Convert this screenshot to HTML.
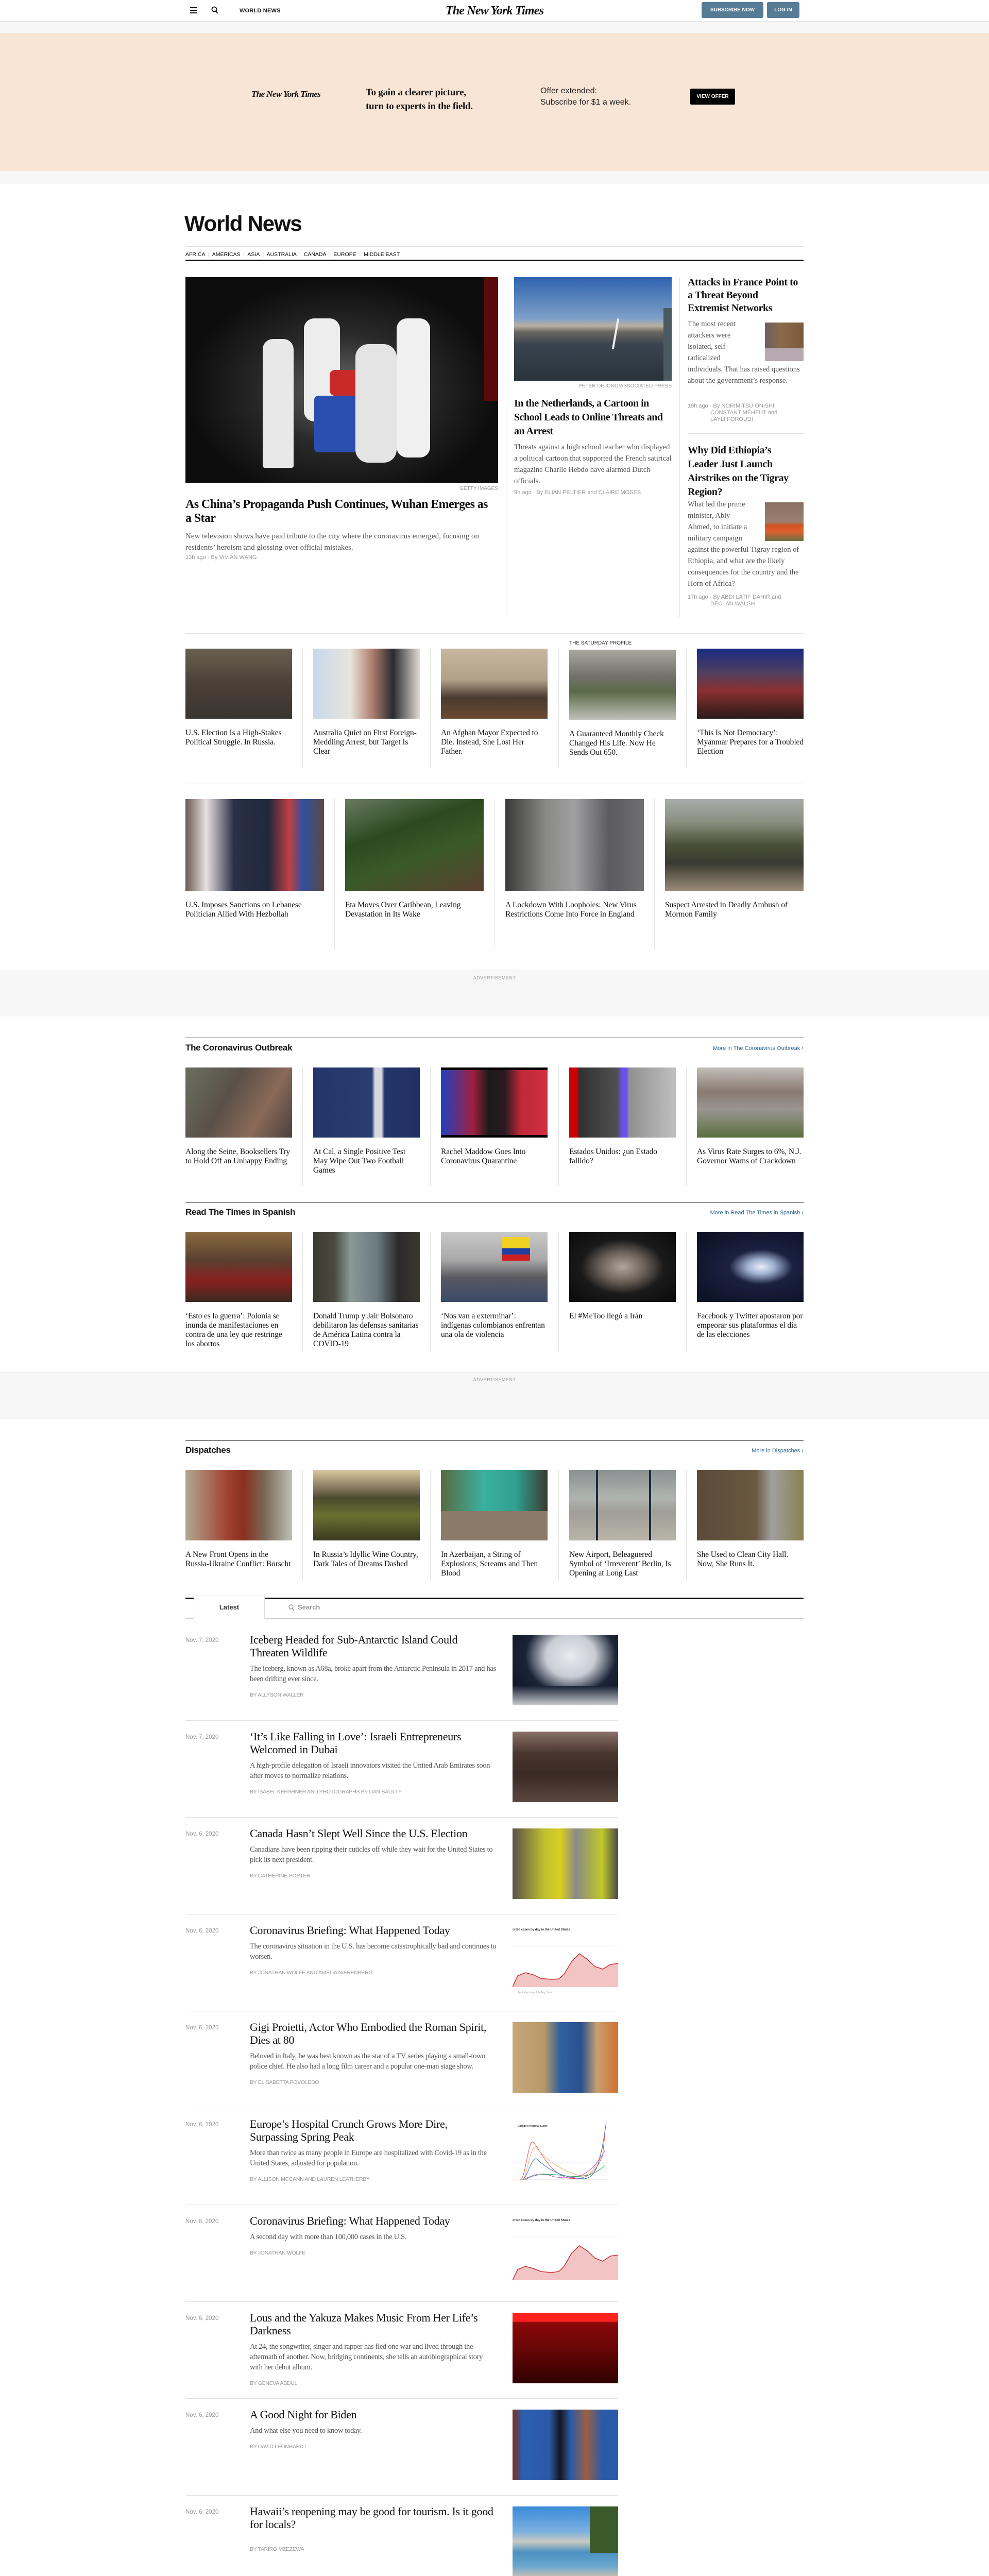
<!DOCTYPE html>
<html style="overflow:hidden;height:5248px"><head><meta charset="utf-8"><style>
*{box-sizing:border-box;margin:0;padding:0}
body{width:1920px;height:5248px;position:relative;background:#fff;font-family:"Liberation Serif",serif;color:#121212;overflow:hidden}
#wrap{position:absolute;left:0;top:0;width:1920px;height:5248px;overflow:hidden}
.abs{position:absolute}
.sans{font-family:"Liberation Sans",sans-serif}
.img{position:absolute;overflow:hidden}
.hl{font-family:"Liberation Serif",serif}
.cap{font-family:"Liberation Sans",sans-serif;font-size:10px;color:#999;text-transform:uppercase}
.by{font-family:"Liberation Sans",sans-serif;font-size:11px;color:#999}
.by b{font-weight:normal;text-transform:uppercase}
.card{position:absolute;width:207px}
.card .pic{width:207px;height:136px}
.card h3{font-weight:normal;font-size:15.5px;line-height:18px;margin-top:19px;letter-spacing:-0.1px}
.vd{position:absolute;width:1px;background:#e2e2e2}
.hr{position:absolute;left:360px;width:1200px;height:1px;background:#e2e2e2}
.sec{position:absolute;left:360px;width:1200px;border-top:1px solid #121212}
.sec h2{font-family:"Liberation Sans",sans-serif;font-weight:bold;font-size:17px;margin-top:9px;letter-spacing:-0.3px}
.sec a{position:absolute;right:0;top:14px;font-family:"Liberation Sans",sans-serif;font-size:11px;color:#326891;text-decoration:none}
.item{position:absolute;left:360px;width:840px;height:188px;border-bottom:1px solid #e2e2e2}
.item .d{position:absolute;left:0;top:26px;font-family:"Liberation Sans",sans-serif;font-size:11.5px;color:#999}
.item h3{position:absolute;left:125px;top:18px;width:480px;font-weight:normal;font-size:22px;line-height:25px;letter-spacing:-0.3px}
.item p{font-size:14.5px;line-height:20px;color:#555;margin-top:9px}
.item .b{font-family:"Liberation Sans",sans-serif;font-size:10.5px;color:#999;margin-top:9px;text-transform:uppercase}
.item .pic{position:absolute;left:635px;top:21px;width:205px;height:137px;overflow:hidden}
.fc{position:absolute;top:5116px;font-family:"Liberation Sans",sans-serif;font-size:12px;line-height:24px;color:#121212}
.fc .h{font-weight:bold;font-size:11px;color:#333}
</style></head><body><div id="wrap">

<!-- header -->
<div class="abs" style="left:0;top:0;width:1920px;height:42px;border-bottom:1px solid #e2e2e2;background:#fff"></div>
<svg class="abs" style="left:369px;top:14px" width="14" height="12"><rect y="0" width="14" height="2" fill="#111"/><rect y="5" width="14" height="2" fill="#111"/><rect y="10" width="14" height="2" fill="#111"/></svg>
<svg class="abs" style="left:410px;top:12px" width="14" height="16"><circle cx="6" cy="6" r="4.5" fill="none" stroke="#111" stroke-width="1.8"/><line x1="9" y1="9.5" x2="12.5" y2="14" stroke="#111" stroke-width="2"/></svg>
<div class="abs sans" style="left:465px;top:15px;font-size:11px;font-weight:bold;letter-spacing:0.2px">WORLD NEWS</div>
<div class="abs" style="left:860px;top:8px;width:200px;text-align:center;font-size:24px;font-weight:bold;letter-spacing:-0.8px;font-style:italic">The New York Times</div>
<div class="abs sans" style="left:1362px;top:4px;width:120px;height:31px;background:#567b95;border-radius:3px;color:#fff;font-size:10px;font-weight:bold;text-align:center;line-height:31px">SUBSCRIBE NOW</div>
<div class="abs sans" style="left:1489px;top:4px;width:63px;height:31px;background:#567b95;border-radius:3px;color:#fff;font-size:10px;font-weight:bold;text-align:center;line-height:31px">LOG IN</div>

<!-- ad band -->
<div class="abs" style="left:0;top:43px;width:1920px;height:314px;background:#f7f7f7"></div>
<div class="abs" style="left:0;top:64px;width:1920px;height:268px;background:#f8e5d5"></div>
<div class="abs" style="left:488px;top:173px;font-size:17px;font-weight:bold;font-style:italic;letter-spacing:-0.6px">The New York Times</div>
<div class="abs" style="left:710px;top:166px;font-size:19px;font-weight:bold;line-height:27px;letter-spacing:-0.3px">To gain a clearer picture,<br>turn to experts in the field.</div>
<div class="abs sans" style="left:1049px;top:166px;font-size:16px;line-height:22px;color:#222">Offer extended:<br>Subscribe for $1 a week.</div>
<div class="abs sans" style="left:1340px;top:172px;width:87px;height:31px;background:#000;color:#fff;font-size:10px;font-weight:bold;text-align:center;line-height:31px;border-radius:2px">VIEW OFFER</div>

<!-- title -->
<div class="abs sans" style="left:358px;top:410px;font-size:42px;font-weight:bold;letter-spacing:-1.2px">World News</div>
<div class="hr" style="top:477px;height:2px"></div>
<div class="abs sans" style="left:360px;top:488px;font-size:10.5px;color:#121212">AFRICA <span style="color:#ccc">&nbsp;|&nbsp;</span> AMERICAS <span style="color:#ccc">&nbsp;|&nbsp;</span> ASIA <span style="color:#ccc">&nbsp;|&nbsp;</span> AUSTRALIA <span style="color:#ccc">&nbsp;|&nbsp;</span> CANADA <span style="color:#ccc">&nbsp;|&nbsp;</span> EUROPE <span style="color:#ccc">&nbsp;|&nbsp;</span> MIDDLE EAST</div>
<div class="abs" style="left:360px;top:504px;width:1200px;height:3px;background:#121212"></div>

<!-- lead -->
<div class="img" style="left:360px;top:538px;width:607px;height:399px;background:radial-gradient(ellipse at 50% 55%,#6a6a6a 0,#2a2a2a 35%,#0d0d0d 70%)">
 <div class="abs" style="left:150px;top:120px;width:60px;height:250px;background:#e8e8e8;border-radius:20px 20px 4px 4px"></div>
 <div class="abs" style="left:230px;top:80px;width:70px;height:200px;background:#ededed;border-radius:20px"></div>
 <div class="abs" style="left:250px;top:230px;width:90px;height:110px;background:#2b4fb0;border-radius:8px"></div>
 <div class="abs" style="left:280px;top:180px;width:70px;height:50px;background:#c82a2a;border-radius:10px"></div>
 <div class="abs" style="left:330px;top:130px;width:80px;height:230px;background:#e4e4e4;border-radius:25px"></div>
 <div class="abs" style="left:410px;top:80px;width:65px;height:270px;background:#f0f0f0;border-radius:20px"></div>
 <div class="abs" style="left:580px;top:0;width:27px;height:240px;background:#5a0a0a"></div>
</div>
<div class="abs cap" style="left:867px;top:943px;width:100px;text-align:right">Getty Images</div>
<div class="abs hl" style="left:360px;top:966px;width:600px;font-size:24px;line-height:27px;font-weight:bold;letter-spacing:-0.6px">As China’s Propaganda Push Continues, Wuhan Emerges as a Star</div>
<div class="abs" style="left:360px;top:1030px;width:600px;font-size:15px;line-height:22px;color:#555">New television shows have paid tribute to the city where the coronavirus emerged, focusing on residents’ heroism and glossing over official mistakes.</div>
<div class="abs by" style="left:360px;top:1076px">13h ago · By <b>Vivian Wang</b></div>

<div class="vd" style="left:982px;top:538px;height:660px"></div>
<div class="vd" style="left:1319px;top:538px;height:660px"></div>

<div class="img" style="left:998px;top:538px;width:306px;height:201px;background:linear-gradient(180deg,#2f63b0 0,#7fa0c8 40%,#b8b0a0 47%,#6a6660 53%,#3a4450 65%,#2a333c 100%)">
 <div class="abs" style="left:195px;top:80px;width:4px;height:60px;background:#eee;transform:rotate(10deg)"></div>
 <div class="abs" style="left:290px;top:60px;width:16px;height:141px;background:#4a5a60"></div>
</div>
<div class="abs cap" style="left:1104px;top:744px;width:200px;text-align:right">Peter Dejong/Associated Press</div>
<div class="abs hl" style="left:998px;top:770px;width:306px;font-size:20px;line-height:27px;font-weight:bold;letter-spacing:-0.5px">In the Netherlands, a Cartoon in School Leads to Online Threats and an Arrest</div>
<div class="abs" style="left:998px;top:857px;width:310px;font-size:14.5px;line-height:22px;color:#555">Threats against a high school teacher who displayed a political cartoon that supported the French satirical magazine Charlie Hebdo have alarmed Dutch officials.</div>
<div class="abs by" style="left:998px;top:950px">9h ago · By <b>Elian Peltier</b> and <b>Claire Moses</b></div>

<div class="abs hl" style="left:1335px;top:536px;width:215px;font-size:20px;line-height:25px;font-weight:bold;letter-spacing:-0.4px">Attacks in France Point to a Threat Beyond Extremist Networks</div>
<div class="img" style="left:1485px;top:626px;width:75px;height:75px;background:linear-gradient(90deg,#6a6060 0,#8a6a48 40%,#7a5a3a 100%)"><div class="abs" style="left:0;top:50px;width:75px;height:25px;background:#b8a8b0"></div></div>
<div class="abs" style="left:1335px;top:618px;width:225px;font-size:14.5px;line-height:22px;color:#555">The most recent<br>attackers were<br>isolated, self-<br>radicalized<br>individuals. That has raised questions about the government’s response.</div>
<div class="abs by" style="left:1335px;top:782px;line-height:13px">19h ago · By <b>Norimitsu Onishi,</b><br><span style="padding-left:44px"><b>Constant Méheut</b> and</span><br><span style="padding-left:44px"><b>Layli Foroudi</b></span></div>
<div class="hr" style="left:1335px;width:225px;top:841px"></div>
<div class="abs hl" style="left:1335px;top:861px;width:215px;font-size:20px;line-height:27px;font-weight:bold;letter-spacing:-0.4px">Why Did Ethiopia’s Leader Just Launch Airstrikes on the Tigray Region?</div>
<div class="img" style="left:1485px;top:975px;width:75px;height:75px;background:linear-gradient(180deg,#8a7060 0,#9a8070 50%,#d05020 60%,#e06030 75%,#6a7040 100%)"></div>
<div class="abs" style="left:1335px;top:968px;width:225px;font-size:14.5px;line-height:22px;color:#555">What led the prime<br>minister, Abiy<br>Ahmed, to initiate a<br>military campaign<br>against the powerful Tigray region of Ethiopia, and what are the likely consequences for the country and the Horn of Africa?</div>
<div class="abs by" style="left:1335px;top:1153px;line-height:13px">17h ago · By <b>Abdi Latif Dahir</b> and<br><span style="padding-left:44px"><b>Declan Walsh</b></span></div>

<!-- row1 -->
<div class="hr" style="top:1229px"></div>
<div class="abs cap" style="left:1105px;top:1243px;font-size:10px;color:#333">The Saturday Profile</div>
<div class="card" style="left:360px;top:1259px"><div class="pic" style="background:linear-gradient(180deg,#6a6050 0,#4a4038 50%,#3a3530 100%)"></div><h3>U.S. Election Is a High-Stakes Political Struggle. In Russia.</h3></div>
<div class="card" style="left:608px;top:1259px"><div class="pic" style="background:linear-gradient(90deg,#c8d8ec 0,#e8e4dc 35%,#b08070 55%,#2a2a30 75%,#e0dcd4 100%)"></div><h3>Australia Quiet on First Foreign-Meddling Arrest, but Target Is Clear</h3></div>
<div class="card" style="left:856px;top:1259px"><div class="pic" style="background:linear-gradient(180deg,#c8b8a0 0,#b0a088 45%,#4a3a30 70%,#6a4a30 100%)"></div><h3>An Afghan Mayor Expected to Die. Instead, She Lost Her Father.</h3></div>
<div class="card" style="left:1105px;top:1261px"><div class="pic" style="background:linear-gradient(180deg,#a8a8a0 0,#707068 40%,#5a6a48 60%,#c0c0b8 100%)"></div><h3>A Guaranteed Monthly Check Changed His Life. Now He Sends Out 650.</h3></div>
<div class="card" style="left:1353px;top:1259px"><div class="pic" style="background:linear-gradient(180deg,#1a2a80 0,#504060 35%,#8a3030 60%,#2a1a1a 100%)"></div><h3>‘This Is Not Democracy’: Myanmar Prepares for a Troubled Election</h3></div>
<div class="vd" style="left:587px;top:1259px;height:231px"></div>
<div class="vd" style="left:835px;top:1259px;height:231px"></div>
<div class="vd" style="left:1084px;top:1259px;height:231px"></div>
<div class="vd" style="left:1332px;top:1259px;height:231px"></div>

<!-- row2 -->
<div class="hr" style="top:1521px"></div>
<div class="card" style="left:360px;top:1551px;width:269px"><div class="pic" style="width:269px;height:178px;background:linear-gradient(90deg,#6a5a50 0,#e8e0e0 15%,#2a3048 35%,#20283c 60%,#c04040 75%,#3050a0 85%,#5a4a40 100%)"></div><h3>U.S. Imposes Sanctions on Lebanese Politician Allied With Hezbollah</h3></div>
<div class="card" style="left:670px;top:1551px;width:269px"><div class="pic" style="width:269px;height:178px;background:linear-gradient(160deg,#6a7a60 0,#2a4a20 35%,#3a5a28 60%,#5a4030 100%)"></div><h3>Eta Moves Over Caribbean, Leaving Devastation in Its Wake</h3></div>
<div class="card" style="left:981px;top:1551px;width:269px"><div class="pic" style="width:269px;height:178px;background:linear-gradient(90deg,#3a3a3a 0,#8a8a88 30%,#a0a0a0 50%,#5a5a60 75%,#707070 100%)"></div><h3>A Lockdown With Loopholes: New Virus Restrictions Come Into Force in England</h3></div>
<div class="card" style="left:1291px;top:1551px;width:269px"><div class="pic" style="width:269px;height:178px;background:linear-gradient(180deg,#a8aca8 0,#8a8f80 25%,#4a5038 50%,#3a3a30 70%,#9a8a78 100%)"></div><h3>Suspect Arrested in Deadly Ambush of Mormon Family</h3></div>
<div class="vd" style="left:649px;top:1551px;height:291px"></div>
<div class="vd" style="left:960px;top:1551px;height:291px"></div>
<div class="vd" style="left:1270px;top:1551px;height:291px"></div>

<!-- ad -->
<div class="abs" style="left:0;top:1882px;width:1920px;height:91px;background:#f7f7f7;border-top:1px solid #eee"></div>
<div class="abs sans" style="left:0;top:1893px;width:1920px;text-align:center;font-size:9px;color:#999;letter-spacing:0.5px">ADVERTISEMENT</div>

<!-- coronavirus -->
<div class="sec" style="top:2014px"><h2>The Coronavirus Outbreak</h2><a>More in The Coronavirus Outbreak ›</a></div>
<div class="card" style="left:360px;top:2072px"><div class="pic" style="background:linear-gradient(120deg,#6a7060 0,#5a5048 40%,#8a6a58 70%,#4a4040 100%)"></div><h3>Along the Seine, Booksellers Try to Hold Off an Unhappy Ending</h3></div>
<div class="card" style="left:608px;top:2072px"><div class="pic" style="background:linear-gradient(90deg,#23356a 0,#2a3c70 55%,#d8d8e0 58%,#d8d8e0 64%,#23356a 67%,#203060 100%)"></div><h3>At Cal, a Single Positive Test May Wipe Out Two Football Games</h3></div>
<div class="card" style="left:856px;top:2072px"><div class="pic" style="background:linear-gradient(90deg,#2040c0 0,#a02040 30%,#1a1a1a 45%,#2a1a20 60%,#c02838 75%,#d03040 100%);border-top:5px solid #000;border-bottom:5px solid #000"></div><h3>Rachel Maddow Goes Into Coronavirus Quarantine</h3></div>
<div class="card" style="left:1105px;top:2072px"><div class="pic" style="background:linear-gradient(90deg,#c00 0,#c00 8%,#303030 9%,#505050 45%,#6a50f0 50%,#6a50f0 54%,#909090 56%,#c0c0c0 100%)"></div><h3>Estados Unidos: ¿un Estado fallido?</h3></div>
<div class="card" style="left:1353px;top:2072px"><div class="pic" style="background:linear-gradient(180deg,#c0beb8 0,#8a7a70 35%,#9a9590 60%,#5a7040 100%)"></div><h3>As Virus Rate Surges to 6%, N.J. Governor Warns of Crackdown</h3></div>
<div class="vd" style="left:587px;top:2072px;height:230px"></div>
<div class="vd" style="left:835px;top:2072px;height:230px"></div>
<div class="vd" style="left:1084px;top:2072px;height:230px"></div>
<div class="vd" style="left:1332px;top:2072px;height:230px"></div>

<!-- spanish -->
<div class="sec" style="top:2333px"><h2>Read The Times in Spanish</h2><a>More in Read The Times in Spanish ›</a></div>
<div class="card" style="left:360px;top:2391px"><div class="pic" style="background:linear-gradient(180deg,#8a6a40 0,#5a4030 40%,#8a2020 70%,#3a2a20 100%)"></div><h3>‘Esto es la guerra’: Polonia se inunda de manifestaciones en contra de una ley que restringe los abortos</h3></div>
<div class="card" style="left:608px;top:2391px"><div class="pic" style="background:linear-gradient(90deg,#3a3a30 0,#4a4a40 20%,#8a9a98 35%,#6a7a80 60%,#2a2a28 80%,#3a3830 100%)"></div><h3>Donald Trump y Jair Bolsonaro debilitaron las defensas sanitarias de América Latina contra la COVID-19</h3></div>
<div class="card" style="left:856px;top:2391px"><div class="pic" style="background:linear-gradient(180deg,#c8c8c8 0,#a8a8a8 40%,#5a5a60 65%,#3a4a6a 100%)"><div class="abs" style="left:118px;top:10px;width:55px;height:22px;background:#f0d020"></div><div class="abs" style="left:118px;top:32px;width:55px;height:12px;background:#2040a0"></div><div class="abs" style="left:118px;top:44px;width:55px;height:12px;background:#d02020"></div></div><h3>‘Nos van a exterminar’: indígenas colombianos enfrentan una ola de violencia</h3></div>
<div class="card" style="left:1105px;top:2391px"><div class="pic" style="background:radial-gradient(ellipse at 50% 50%,#b0a8a0 0,#6a6058 30%,#1a1a1a 55%,#0a0a0a 100%)"></div><h3>El #MeToo llegó a Irán</h3></div>
<div class="card" style="left:1353px;top:2391px"><div class="pic" style="background:radial-gradient(ellipse at 60% 50%,#e8eef8 0,#a0b0d0 15%,#1a2040 35%,#0a1020 100%)"></div><h3>Facebook y Twitter apostaron por empeorar sus plataformas el día de las elecciones</h3></div>
<div class="vd" style="left:587px;top:2391px;height:231px"></div>
<div class="vd" style="left:835px;top:2391px;height:231px"></div>
<div class="vd" style="left:1084px;top:2391px;height:231px"></div>
<div class="vd" style="left:1332px;top:2391px;height:231px"></div>

<!-- ad -->
<div class="abs" style="left:0;top:2663px;width:1920px;height:91px;background:#f7f7f7;border-top:1px solid #eee"></div>
<div class="abs sans" style="left:0;top:2673px;width:1920px;text-align:center;font-size:9px;color:#999;letter-spacing:0.5px">ADVERTISEMENT</div>

<!-- dispatches -->
<div class="sec" style="top:2795px"><h2>Dispatches</h2><a>More in Dispatches ›</a></div>
<div class="card" style="left:360px;top:2853px"><div class="pic" style="height:137px;background:linear-gradient(90deg,#b0a890 0,#a04030 40%,#8a3020 55%,#7a6a58 75%,#c0c0b8 100%)"></div><h3>A New Front Opens in the Russia-Ukraine Conflict: Borscht</h3></div>
<div class="card" style="left:608px;top:2853px"><div class="pic" style="height:137px;background:linear-gradient(180deg,#d8c8a0 0,#8a7a60 25%,#4a4a30 40%,#6a7030 65%,#3a3a20 100%)"></div><h3>In Russia’s Idyllic Wine Country, Dark Tales of Dreams Dashed</h3></div>
<div class="card" style="left:856px;top:2853px"><div class="pic" style="height:137px;background:linear-gradient(90deg,#5a6a40 0,#3ab0a0 40%,#30a090 70%,#3a3a30 100%)"><div class="abs" style="left:0;top:80px;width:207px;height:57px;background:#8a7a68"></div></div><h3>In Azerbaijan, a String of Explosions, Screams and Then Blood</h3></div>
<div class="card" style="left:1105px;top:2853px"><div class="pic" style="height:137px;background:linear-gradient(180deg,#8a9090 0,#b0b4b0 40%,#a09e98 60%,#b8b4a8 100%)"><div class="abs" style="left:52px;top:0;width:4px;height:137px;background:#1a2a3a"></div><div class="abs" style="left:155px;top:0;width:4px;height:137px;background:#1a2a3a"></div></div><h3>New Airport, Beleaguered Symbol of ‘Irreverent’ Berlin, Is Opening at Long Last</h3></div>
<div class="card" style="left:1353px;top:2853px"><div class="pic" style="height:137px;background:linear-gradient(90deg,#5a4a38 0,#6a5840 55%,#a0a0a0 70%,#8a8050 100%)"></div><h3>She Used to Clean City Hall. Now, She Runs It.</h3></div>
<div class="vd" style="left:587px;top:2853px;height:214px"></div>
<div class="vd" style="left:835px;top:2853px;height:214px"></div>
<div class="vd" style="left:1084px;top:2853px;height:214px"></div>
<div class="vd" style="left:1332px;top:2853px;height:214px"></div>

<!-- latest tabs -->
<div class="abs" style="left:360px;top:3101px;width:1200px;height:3px;background:#121212"></div>
<div class="abs" style="left:360px;top:3141px;width:1200px;height:1px;background:#ccc"></div>
<div class="abs sans" style="left:376px;top:3097px;width:138px;height:46px;background:#fff;border:1px solid #ddd;border-bottom:none;border-radius:3px 3px 0 0;text-align:center;line-height:44px;font-size:13px;font-weight:bold;color:#333">Latest</div>
<svg class="abs" style="left:560px;top:3114px" width="12" height="13"><circle cx="5" cy="5" r="4" fill="none" stroke="#999" stroke-width="1.5"/><line x1="8" y1="8" x2="11" y2="12" stroke="#999" stroke-width="1.5"/></svg>
<div class="abs sans" style="left:578px;top:3112px;font-size:13px;font-weight:bold;color:#999">Search</div>

<!-- latest items -->
<div class="item" style="top:3152px"><div class="d">Nov. 7, 2020</div><h3>Iceberg Headed for Sub-Antarctic Island Could Threaten Wildlife<p>The iceberg, known as A68a, broke apart from the Antarctic Peninsula in 2017 and has been drifting ever since.</p><div class="b">By Allyson Waller</div></h3><div class="pic" style="background:radial-gradient(ellipse at 55% 30%,#e8ecf0 0,#c8ccd4 30%,#1a2436 55%,#101828 80%);"><div class="abs" style="left:0;top:100px;width:205px;height:37px;background:linear-gradient(180deg,#1a2436,#c8ccd0)"></div></div></div>
<div class="item" style="top:3340px"><div class="d">Nov. 7, 2020</div><h3>‘It’s Like Falling in Love’: Israeli Entrepreneurs Welcomed in Dubai<p>A high-profile delegation of Israeli innovators visited the United Arab Emirates soon after moves to normalize relations.</p><div class="b">By Isabel Kershner and Photographs by Dan Balilty</div></h3><div class="pic" style="background:linear-gradient(180deg,#8a7068 0,#4a3830 30%,#3a2a24 60%,#5a4840 100%)"></div></div>
<div class="item" style="top:3528px"><div class="d">Nov. 6, 2020</div><h3>Canada Hasn’t Slept Well Since the U.S. Election<p>Canadians have been ripping their cuticles off while they wait for the United States to pick its next president.</p><div class="b">By Catherine Porter</div></h3><div class="pic" style="background:linear-gradient(90deg,#5a5048 0,#c0c030 30%,#d8d020 45%,#8a8a88 60%,#c0c828 85%,#4a4a48 100%)"></div></div>
<div class="item" style="top:3716px"><div class="d">Nov. 6, 2020</div><h3>Coronavirus Briefing: What Happened Today<p>The coronavirus situation in the U.S. has become catastrophically bad and continues to worsen.</p><div class="b">By Jonathan Wolfe and Amelia Nierenberg</div></h3><div class="pic" style="background:#fff"><svg width="205" height="137"><text x="0" y="10" font-family="Liberation Sans" font-size="6" font-weight="bold" fill="#333">orted cases by day in the United States</text><line x1="0" y1="40" x2="205" y2="40" stroke="#ddd" stroke-dasharray="2"/><path d="M0,120 L10,98 L25,92 L40,96 L55,103 L75,105 L90,104 L100,95 L115,70 L130,55 L145,66 L160,80 L175,85 L190,76 L205,74 L205,120 Z" fill="#f2c4c4"/><path d="M0,120 L10,98 L25,92 L40,96 L55,103 L75,105 L90,104 L100,95 L115,70 L130,55 L145,66 L160,80 L175,85 L190,76 L205,74" fill="none" stroke="#d03030" stroke-width="1.5"/><text x="10" y="132" font-family="Liberation Sans" font-size="5" fill="#999">April    May    June    July    Aug.    Sept.</text></svg></div></div>
<div class="item" style="top:3904px"><div class="d">Nov. 6, 2020</div><h3>Gigi Proietti, Actor Who Embodied the Roman Spirit, Dies at 80<p>Beloved in Italy, he was best known as the star of a TV series playing a small-town police chief. He also had a long film career and a popular one-man stage show.</p><div class="b">By Elisabetta Povoledo</div></h3><div class="pic" style="background:linear-gradient(90deg,#c8a878 0,#b89868 30%,#3060a0 45%,#2a5090 65%,#c8a070 80%,#d07030 100%)"></div></div>
<div class="item" style="top:4092px"><div class="d">Nov. 6, 2020</div><h3>Europe’s Hospital Crunch Grows More Dire, Surpassing Spring Peak<p>More than twice as many people in Europe are hospitalized with Covid-19 as in the United States, adjusted for population.</p><div class="b">By Allison McCann and Lauren Leatherby</div></h3><div class="pic" style="background:#fff"><svg width="205" height="137"><text x="10" y="15" font-family="Liberation Sans" font-size="5" font-weight="bold" fill="#333">Europe's Hospital Surge</text><line x1="0" y1="85" x2="185" y2="85" stroke="#eee"/><line x1="0" y1="118" x2="185" y2="118" stroke="#ddd"/><path d="M15,118 C25,118 30,40 40,45 C55,60 70,105 110,115 C140,118 160,110 175,70 L180,20" fill="none" stroke="#e05040" stroke-width="1"/><path d="M18,118 C28,118 34,50 45,55 C60,70 80,95 130,110 C150,112 165,100 180,35" fill="none" stroke="#f0b060" stroke-width="1"/><path d="M20,118 C30,110 38,70 48,78 C60,90 90,115 140,116 C160,112 170,95 182,5" fill="none" stroke="#3070d0" stroke-width="1"/><path d="M20,118 C40,110 50,100 80,112 C120,118 150,115 180,60" fill="none" stroke="#c050c0" stroke-width="1"/><path d="M25,118 C40,108 60,104 100,110 C140,115 160,108 180,90" fill="none" stroke="#30a060" stroke-width="1"/></svg></div></div>
<div class="item" style="top:4280px"><div class="d">Nov. 6, 2020</div><h3>Coronavirus Briefing: What Happened Today<p>A second day with more than 100,000 cases in the U.S.</p><div class="b">By Jonathan Wolfe</div></h3><div class="pic" style="background:#fff"><svg width="205" height="137"><text x="0" y="10" font-family="Liberation Sans" font-size="6" font-weight="bold" fill="#333">orted cases by day in the United States</text><line x1="0" y1="40" x2="205" y2="40" stroke="#ddd" stroke-dasharray="2"/><path d="M0,125 L10,104 L25,98 L40,102 L55,108 L75,110 L90,108 L100,98 L115,72 L130,58 L145,68 L160,82 L175,88 L190,78 L205,76 L205,125 Z" fill="#f2c4c4"/><path d="M0,125 L10,104 L25,98 L40,102 L55,108 L75,110 L90,108 L100,98 L115,72 L130,58 L145,68 L160,82 L175,88 L190,78 L205,76" fill="none" stroke="#d03030" stroke-width="1.5"/></svg></div></div>
<div class="item" style="top:4468px"><div class="d">Nov. 6, 2020</div><h3>Lous and the Yakuza Makes Music From Her Life’s Darkness<p>At 24, the songwriter, singer and rapper has fled one war and lived through the aftermath of another. Now, bridging continents, she tells an autobiographical story with her debut album.</p><div class="b">By Geneva Abdul</div></h3><div class="pic" style="background:linear-gradient(180deg,#ff2020 0,#ff2020 12%,#8a0808 14%,#6a0606 50%,#300000 100%)"></div></div>
<div class="item" style="top:4656px"><div class="d">Nov. 6, 2020</div><h3>A Good Night for Biden<p>And what else you need to know today.</p><div class="b">By David Leonhardt</div></h3><div class="pic" style="background:linear-gradient(90deg,#7a3020 0,#2a60b0 10%,#2a5aa8 35%,#151520 45%,#2a5aa8 55%,#9a6040 70%,#2a5aa8 85%,#2a5aa8 100%)"></div></div>
<div class="item" style="top:4844px;border-bottom:none"><div class="d">Nov. 6, 2020</div><h3>Hawaii’s reopening may be good for tourism. Is it good for locals?<div class="b" style="margin-top:24px">By Tariro Mzezewa</div></h3><div class="pic" style="background:linear-gradient(180deg,#3a8ad8 0,#7ab0e0 35%,#c8c8c0 50%,#4a90c0 65%,#6aa8d0 85%,#c8c0b0 100%)"><div class="abs" style="left:150px;top:0;width:55px;height:90px;background:#3a5a2a"></div></div></div>

<!-- footer -->
<div class="abs" style="left:360px;top:5058px;width:1200px;height:4px;border-top:2px solid #e2e2e2;border-bottom:1px solid #e2e2e2"></div>
<div class="abs" style="left:360px;top:5072px;font-size:19px;font-weight:bold;font-style:italic;letter-spacing:-0.7px">The New York Times</div>
<div class="abs sans" style="left:1460px;top:5084px;width:100px;text-align:right;font-size:10px;color:#326891">Go to Home Page »</div>
<div class="fc" style="left:360px"><div class="h">NEWS</div>Home Page<br>World<br>U.S.<br>Politics</div>
<div class="fc" style="left:557px"><div class="h">OPINION</div>Today's Opinion<br>Op-Ed Columnists<br>Editorials<br>Op-Ed Contributors</div>
<div class="fc" style="left:755px"><div class="h">ARTS</div>Today's Arts<br>Art &amp; Design<br>Books<br>Dance</div>
<div class="fc" style="left:952px"><div class="h">LIVING</div>At Home<br>Automobiles<br>Games<br>Education</div>
<div class="fc" style="left:1149px"><div class="h">MORE</div>Reader Center<br>Wirecutter<br>Live Events<br>The Learning Network</div>
<div class="vd" style="left:1347px;top:5117px;height:131px"></div>
<div class="fc" style="left:1363px;line-height:32px;font-weight:bold;font-size:13px"><div class="h" style="line-height:24px">SUBSCRIBE</div>▤ Home Delivery<br>𝕿 Digital Subscriptions<br>▞ Games</div>

</div></body></html>
